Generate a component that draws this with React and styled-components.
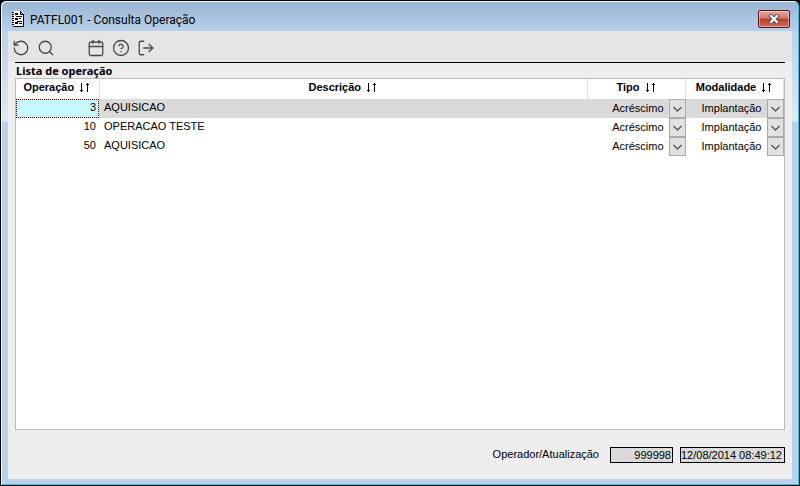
import React from "react";
import styled, { createGlobalStyle } from "styled-components";
import { RotateCcw, Search, Calendar, CircleHelp, LogOut } from "lucide-react";

const GlobalStyle = createGlobalStyle`
  * {
    box-sizing: border-box;
  }
  body {
    margin: 0;
    font-family: "Liberation Sans", Arial, sans-serif;
    font-size: 11px;
    line-height: 14px;
    color: #000;
    background: #000;
  }
  button, input, select {
    font: inherit;
    color: inherit;
    margin: 0;
  }
`;

const Window = styled.main`
  display: flex;
  flex-direction: column;
  min-height: 100vh;
  padding: 0 6px 6px;
  border: 1px solid #000;
  border-radius: 6px 6px 0 0;
  background: linear-gradient(#98b4d2 0, #b9d1ea 30px, #dfe9f5 120px, #b9d1ea 121px);
  box-shadow: inset 1px 1px 0 #f4f8fc, inset -1px -1px 0 #26cde8;
`;

const TitleBar = styled.header`
  display: flex;
  align-items: center;
  gap: 5px;
  height: 30px;
  padding: 6px 3px 0 5px;
`;

const Title = styled.h1`
  flex: 1;
  margin: 0;
  padding-top: 2px;
  font-family: Roboto, sans-serif;
  font-size: 12px;
  font-weight: 400;
  line-height: 16px;
`;

const CloseButton = styled.button`
  display: flex;
  align-items: center;
  justify-content: center;
  width: 32px;
  height: 18px;
  padding: 0;
  border: 1px solid #54161b;
  border-radius: 2px;
  background: linear-gradient(#e5a79c 0, #d3786b 45%, #bc3d26 50%, #cf6d56 100%);
  box-shadow: inset 0 0 0 1px rgba(255, 255, 255, 0.4);
`;

const Client = styled.div`
  display: flex;
  flex: 1;
  flex-direction: column;
  margin: 0 1px;
  background: #eee;
`;

const Toolbar = styled.nav`
  display: flex;
  align-items: center;
  gap: 7px;
  height: 31px;
  padding: 2px 4px 0;
  background: #e5e5e5;
`;

const ToolButton = styled.button`
  display: flex;
  margin-left: ${({ $spaced }) => ($spaced ? "25px" : "0")};
  padding: 0;
  border: 0;
  background: none;
  color: #484848;
`;

const Content = styled.section`
  display: flex;
  flex: 1;
  flex-direction: column;
  margin: 0 7px;
  border-top: 1px solid #000;
`;

const ListTitle = styled.h2`
  margin: 0;
  padding: 1px 1px 0;
  font-family: "Noto Sans", sans-serif;
  font-size: 11px;
  font-weight: 700;
  line-height: 14px;
`;

const Grid = styled.div`
  flex: 1;
  border: 1px solid #bbb;
  background: #fff;
`;

const Table = styled.table`
  width: 100%;
  table-layout: fixed;
  border-collapse: collapse;
`;

const Col = styled.col`
  width: ${({ $width }) => $width || "auto"};
`;

const HeadCell = styled.th`
  height: 20px;
  padding: 0 1px 4px 0;
  border-right: 1px solid #e0e0e0;
`;

const SortButton = styled.button`
  display: inline-flex;
  align-items: center;
  gap: 5px;
  padding: 0;
  border: 0;
  background: none;
  font-weight: 700;
`;

const Row = styled.tr`
  background: ${({ $selected }) => ($selected ? "#dadada" : "#fff")};
`;

const Cell = styled.td`
  height: 19px;
  padding: ${({ $flush }) => ($flush ? "0" : "0 3px 3px 5px")};
  text-align: ${({ $align }) => $align || "left"};
  background: ${({ $focused }) => ($focused ? "#c8f8ff" : "transparent")};
  outline: ${({ $focused }) => ($focused ? "1px dotted #400" : "none")};
  outline-offset: -1px;
`;

const SelectBox = styled.div`
  position: relative;
  display: flex;
  height: 19px;
`;

const Select = styled.select`
  width: 100%;
  padding: 0 22px 2px 0;
  border: 0;
  appearance: none;
  background: transparent;
  text-align: right;
  text-align-last: right;
`;

const SelectArrow = styled.span`
  position: absolute;
  top: 0;
  right: 0;
  display: flex;
  align-items: center;
  justify-content: center;
  width: 17px;
  height: 19px;
  border: 1px solid #aaa;
  background: #e1e1e1;
  pointer-events: none;
`;

const Footer = styled.footer`
  display: flex;
  align-items: center;
  justify-content: flex-end;
  gap: 7px;
  height: 49px;
`;

const Label = styled.label`
  margin-right: 4px;
  padding-bottom: 2px;
`;

const Field = styled.input`
  width: ${({ $width }) => $width};
  height: 16px;
  padding: ${({ $align }) => ($align === "right" ? "0 1px" : "0")};
  border: 1px solid #000;
  border-radius: 0;
  background: #dadada;
  text-align: ${({ $align }) => $align || "left"};
`;

const DocumentIcon = () => (
  <svg width="13" height="16" viewBox="0 0 13 16" shapeRendering="crispEdges" aria-hidden="true">
    <path d="M1 0h8l3 3v13H1z" fill="#fff" />
    <path d="M11 4h1v12h-1zM1 15h11v1H1zM8 0h1v3h3v1H8zM9 1h1v1H9zM10 2h1v1h-1z" />
    <path d="M0 1h2v1H0zM0 3h2v1H0zM0 5h2v1H0zM0 7h2v1H0zM0 9h2v1H0zM0 11h2v1H0zM0 13h2v1H0z" />
    <path d="M3 2h3v2H3zM4 5h6v1H4zM3 7h3v2H3zM7 7h2v1H7zM5 10h5v1H5zM3 11h3v2H3zM7 12h3v1H7z" />
  </svg>
);

const CloseIcon = () => (
  <svg width="12" height="10" viewBox="0 0 12 10" aria-hidden="true">
    <path d="M3 2l6 6M9 2l-6 6" stroke="#535666" strokeWidth="4" strokeLinecap="square" />
    <path d="M3 2l6 6M9 2l-6 6" stroke="#fff" strokeWidth="2" strokeLinecap="square" />
  </svg>
);

const SortIcon = () => (
  <svg width="11" height="10" viewBox="0 0 11 10" shapeRendering="crispEdges" aria-hidden="true">
    <path d="M2 1h1v9h-1zM1 8h3v1h-3z" />
    <path d="M8 1h1v9h-1zM7 2h3v1h-3z" />
  </svg>
);

const ArrowIcon = () => (
  <svg width="9" height="7" viewBox="0 0 9 7" aria-hidden="true">
    <path d="M.5 2l4 4l4-4" fill="none" stroke="#555" strokeWidth="1.3" />
  </svg>
);

const tools = [
  { label: "Atualizar", icon: RotateCcw },
  { label: "Pesquisar", icon: Search },
  { label: "Calendário", icon: Calendar, spaced: true },
  { label: "Ajuda", icon: CircleHelp },
  { label: "Sair", icon: LogOut },
];

const columns = [
  { name: "Operação", width: "83px" },
  { name: "Descrição" },
  { name: "Tipo", width: "98px" },
  { name: "Modalidade", width: "98px" },
];

const operations = [
  { id: 3, description: "AQUISICAO", type: "Acréscimo", mode: "Implantação" },
  { id: 10, description: "OPERACAO TESTE", type: "Acréscimo", mode: "Implantação" },
  { id: 50, description: "AQUISICAO", type: "Acréscimo", mode: "Implantação" },
];

const SelectCell = ({ label, value }) => (
  <Cell $flush>
    <SelectBox>
      <Select aria-label={label} defaultValue={value}>
        <option>{value}</option>
      </Select>
      <SelectArrow>
        <ArrowIcon />
      </SelectArrow>
    </SelectBox>
  </Cell>
);

const App = () => {
  const [selected, setSelected] = React.useState(3);

  return (
    <>
      <GlobalStyle />
      <Window>
        <TitleBar>
          <DocumentIcon />
          <Title>PATFL001 - Consulta Operação</Title>
          <CloseButton aria-label="Fechar">
            <CloseIcon />
          </CloseButton>
        </TitleBar>
        <Client>
          <Toolbar>
            {tools.map(({ label, icon: Icon, spaced }) => (
              <ToolButton key={label} aria-label={label} $spaced={spaced}>
                <Icon size={18} strokeWidth={1.7} />
              </ToolButton>
            ))}
          </Toolbar>
          <Content>
            <ListTitle>Lista de operação</ListTitle>
            <Grid>
              <Table>
                <colgroup>
                  {columns.map((column) => (
                    <Col key={column.name} $width={column.width} />
                  ))}
                </colgroup>
                <thead>
                  <tr>
                    {columns.map((column) => (
                      <HeadCell key={column.name}>
                        <SortButton>
                          {column.name}
                          <SortIcon />
                        </SortButton>
                      </HeadCell>
                    ))}
                  </tr>
                </thead>
                <tbody>
                  {operations.map((item) => (
                    <Row
                      key={item.id}
                      $selected={item.id === selected}
                      onClick={() => setSelected(item.id)}
                    >
                      <Cell $align="right" $focused={item.id === selected}>
                        {item.id}
                      </Cell>
                      <Cell>{item.description}</Cell>
                      <SelectCell label="Tipo" value={item.type} />
                      <SelectCell label="Modalidade" value={item.mode} />
                    </Row>
                  ))}
                </tbody>
              </Table>
            </Grid>
            <Footer>
              <Label htmlFor="operator">Operador/Atualização</Label>
              <Field id="operator" $width="63px" $align="right" defaultValue="999998" readOnly />
              <Field
                aria-label="Atualização"
                $width="105px"
                defaultValue="12/08/2014 08:49:12"
                readOnly
              />
            </Footer>
          </Content>
        </Client>
      </Window>
    </>
  );
};

export default App;
